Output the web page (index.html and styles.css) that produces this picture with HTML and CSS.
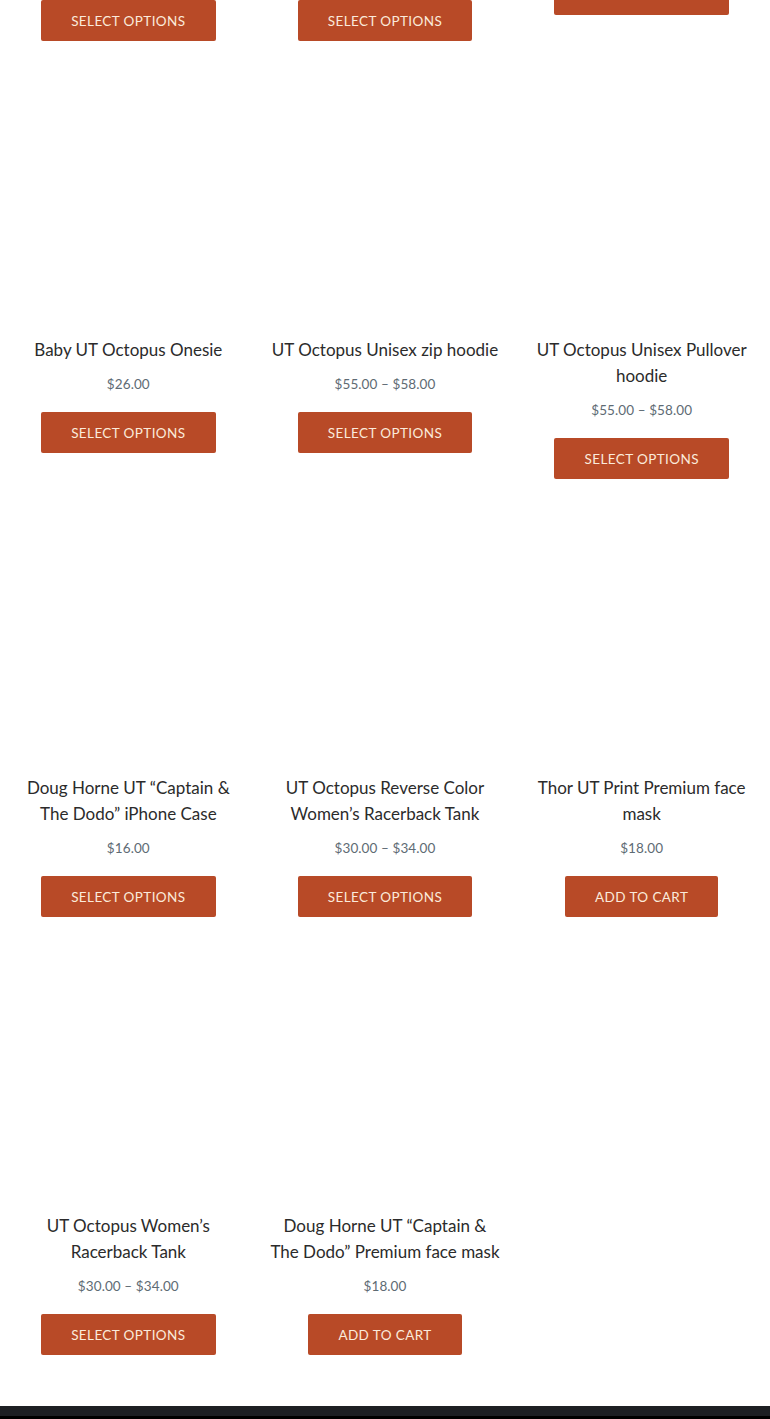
FILE: index.html
```html
<!DOCTYPE html>
<html lang="en">
<head>
<meta charset="utf-8">
<title>Shop</title>
<link rel="stylesheet" href="styles.css">
</head>
<body>
<main class="shop">
  <ul class="products">
    <li class="product">
      <div class="thumb"></div>
      <h2 class="title">UT Octopus Unisex Long Sleeve Tee</h2>
      <p class="price">$28.00 – $30.00</p>
      <a class="button" href="#">Select options</a>
    </li>
    <li class="product">
      <div class="thumb"></div>
      <h2 class="title">UT Octopus Unisex Short Sleeve Tee</h2>
      <p class="price">$24.00 – $26.00</p>
      <a class="button" href="#">Select options</a>
    </li>
    <li class="product">
      <div class="thumb"></div>
      <h2 class="title">UT Octopus Sticker</h2>
      <p class="price">$4.00</p>
      <a class="button" href="#">Select options</a>
    </li>

    <li class="product">
      <div class="thumb"></div>
      <h2 class="title">Baby UT Octopus Onesie</h2>
      <p class="price">$26.00</p>
      <a class="button" href="#">Select options</a>
    </li>
    <li class="product">
      <div class="thumb"></div>
      <h2 class="title">UT Octopus Unisex zip hoodie</h2>
      <p class="price">$55.00 – $58.00</p>
      <a class="button" href="#">Select options</a>
    </li>
    <li class="product">
      <div class="thumb"></div>
      <h2 class="title">UT Octopus Unisex Pullover hoodie</h2>
      <p class="price">$55.00 – $58.00</p>
      <a class="button" href="#">Select options</a>
    </li>

    <li class="product">
      <div class="thumb"></div>
      <h2 class="title">Doug Horne UT “Captain &amp; The Dodo” iPhone Case</h2>
      <p class="price">$16.00</p>
      <a class="button" href="#">Select options</a>
    </li>
    <li class="product">
      <div class="thumb"></div>
      <h2 class="title">UT Octopus Reverse Color Women’s Racerback Tank</h2>
      <p class="price">$30.00 – $34.00</p>
      <a class="button" href="#">Select options</a>
    </li>
    <li class="product">
      <div class="thumb"></div>
      <h2 class="title">Thor UT Print Premium face mask</h2>
      <p class="price">$18.00</p>
      <a class="button" href="#">Add to cart</a>
    </li>

    <li class="product">
      <div class="thumb"></div>
      <h2 class="title">UT Octopus Women’s Racerback Tank</h2>
      <p class="price">$30.00 – $34.00</p>
      <a class="button" href="#">Select options</a>
    </li>
    <li class="product">
      <div class="thumb"></div>
      <h2 class="title">Doug Horne UT “Captain &amp; The Dodo” Premium face mask</h2>
      <p class="price">$18.00</p>
      <a class="button" href="#">Add to cart</a>
    </li>
  </ul>
</main>
<footer class="footer">
  <div class="footer-bottom"></div>
</footer>
</body>
</html>
```
FILE: styles.css
```css
html, body {
  margin: 0;
  padding: 0;
  background: #ffffff;
}

body {
  font-family: "Lato", "Open Sans", sans-serif;
  color: #2b2b2b;
}

.shop {
  padding: 0 8px;
  margin-top: -358px;
}

.products {
  list-style: none;
  margin: 0;
  padding: 0;
  display: grid;
  grid-template-columns: repeat(3, 1fr);
  column-gap: 16px;
  row-gap: 39px;
  align-items: start;
}

.product {
  display: flex;
  flex-direction: column;
  align-items: center;
  text-align: center;
}

.thumb {
  width: 100%;
  height: 236px;
  margin-bottom: 21px;
}

.title {
  margin: 0;
  padding: 0 4px;
  font-size: 17px;
  font-weight: 400;
  line-height: 26px;
  color: #2b2b2b;
}

.price {
  margin: 11px 0 0;
  font-size: 13.5px;
  line-height: 20px;
  color: #5e6b74;
  letter-spacing: 0.1px;
}

.button {
  margin-top: 18px;
  display: inline-flex;
  align-items: center;
  justify-content: center;
  height: 41px;
  padding: 0 30px;
  box-sizing: border-box;
  background: #b84a27;
  color: #fbeadb;
  border-radius: 2px;
  font-size: 13.5px;
  letter-spacing: 0.4px;
  text-transform: uppercase;
  text-decoration: none;
}

.footer {
  margin-top: 51px;
  background: #1d1f23;
  padding-top: 10px;
}

.footer-bottom {
  height: 20px;
  background: #000000;
}
```
